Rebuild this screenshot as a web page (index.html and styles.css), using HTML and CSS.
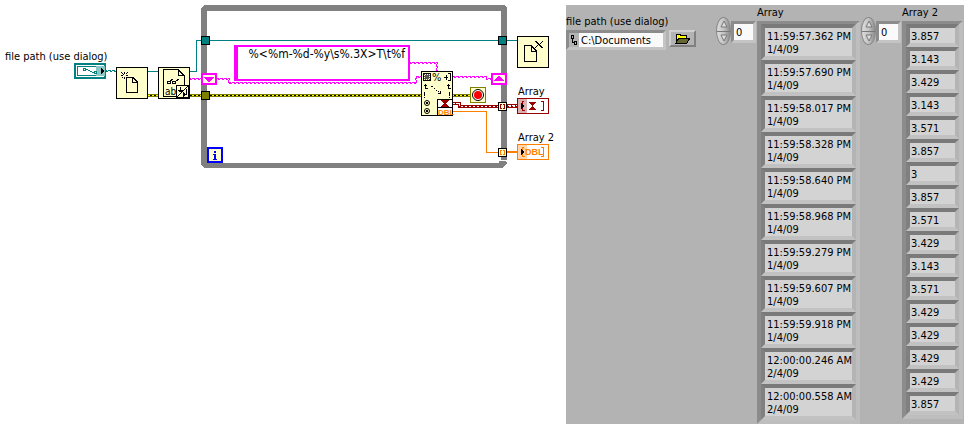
FILE: index.html
```html
<!DOCTYPE html>
<html lang="en">
<head>
<meta charset="utf-8">
<title>Read text file in a loop</title>
<link rel="stylesheet" href="styles.css">
</head>
<body>
<main class="workspace">
  <section class="diagram" aria-label="Block diagram">
    <svg class="canvas" width="566" height="180" viewBox="0 0 566 180" shape-rendering="crispEdges">
      <defs>
        <pattern id="wave-pink" width="4" height="2" patternUnits="userSpaceOnUse"><path d="M0 0h3v1h-3zM2 1h2v1h-2z" fill="#f0f"/></pattern>
        <pattern id="wave-pink-v" width="2" height="4" patternUnits="userSpaceOnUse"><path d="M0 0v3h1v-3zM1 2v2h1v-2z" fill="#f0f"/></pattern>
        <pattern id="wave-teal" width="4" height="2" patternUnits="userSpaceOnUse"><path d="M0 0h3v1h-3zM2 1h2v1h-2z" fill="#008080"/></pattern>
        <pattern id="error" width="4" height="4" y="94" patternUnits="userSpaceOnUse"><path d="M0 0h4v3h-4z" fill="#808000"/><path d="M0 1h2v1h-2z" fill="#ff0"/><path d="M2 1h2v1h-2z" fill="#000"/></pattern>
        <pattern id="time" width="4" height="2" y="1" patternUnits="userSpaceOnUse"><path d="M0 0h4v2h-4z" fill="#990000"/><path d="M0 0h3v1h-3zM1 1h2v1h-2z" fill="#fff"/></pattern>
      </defs>

      <!-- while loop frame -->
      <path d="M204 5H504L507 8V160H501V11H207V163H499V161H505L507 163L504 168H204L201 165V8Z" fill="#808080"/>
      <path d="M503 168v-1h1v-1h2v1h1v1z" fill="#fff"/>

      <!-- wires -->
      <path d="M148 71.500H158M190 71.500H196.500V40.500H517" fill="none" stroke="#008080"/>
      <path d="M106 70h10v2h-10z" fill="url(#wave-teal)"/>
      <path d="M148 94h10v3h-10zM190 94h231v3h-231zM453 94h17v3h-17z" fill="url(#error)"/>
      <path d="M190 78h11v2h-11zM217 78h11v2h-11zM229 82h188v2h-188zM416 76h5v2h-5zM410 62h28v2h-28zM453 76h34v2h-34zM486 78h5v2h-5z" fill="url(#wave-pink)"/>
      <path d="M228 78h2v6h-2zM415 77h2v6h-2zM436 63h2v8h-2z" fill="url(#wave-pink-v)"/>
      <path d="M453 103h5v2h-5zM459 106h39v1h-39zM507 105h10v2h-10z" fill="url(#time)"/>
      <path d="M453 102.500H460.500V105.500H498M453 104.500H458.500V107.500H498M507 104.500h10M507 107.500h10" fill="none" stroke="#900"/>
      <path d="M453 111.500H486.500V152.500H498" fill="none" stroke="#ff8000"/>
      <path d="M507 151h10v2h-10z" fill="#ff8000"/>

      <!-- file path terminal -->
      <text x="5" y="60">file path (use dialog)</text>
      <path d="M75 64h30v14h-30z" fill="#fff" stroke="#008080" stroke-width="2"/>
      <path d="M77.500 66.500h26v9h-26z" fill="#fff" stroke="#008080"/>
      <path d="M96 66h9v10h-9z" fill="#8cc6c6"/>
      <path d="M101 68h1v1h1v1h1v2h-1v1h-1v1h-1z" fill="#000"/>
      <path d="M83.500 68.500h2v2h-2zM94.500 71.500h2v2h-2zM86 69.500h2M88 70.500h2M90 71.500h2M92 72.500h2" fill="none" stroke="#008080"/>

      <!-- open file -->
      <path d="M116.500 67.500h31v31h-31z" class="node"/>
      <path d="M126.500 77.500H133L137.500 82V92.500H126.500ZM132.500 77.500V82.500H137" class="ink"/>
      <path d="M124 72h1v2h-1zM121 72h1v1h1v1h1v1h-1v-1h-1zM127 72h1v1h-1v1h-1v-1h1zM121 75h2v1h-2zM126 75h2v1h-2zM124 77h1v2h-1zM122 77h1v1h-1z" fill="#000"/>

      <!-- read text file -->
      <path d="M158.500 67.500h31v31h-31z" class="node"/>
      <path d="M163.500 96.500V69.500H178L184.500 76V86M163.500 96.500H176M178.500 69.500V75.500H184" class="ink"/>
      <path d="M167.500 81.500h3v2h-3zM172.500 81.500h3v2h-3zM170 81l3-2M176 81l3-2" class="ink"/>
      <text x="165" y="95" class="tiny">ab</text>
      <path d="M176.500 85.500h12v12h-12z" class="node"/>
      <path d="M177 97L188 86M180.500 87v4M178 90.500h5M179 91.500h3M186.500 89v5M183 94.500h4M183.500 92v5M184.500 93v3" class="ink"/>

      <!-- loop tunnels and shift registers -->
      <path d="M201.500 36.500h8v8h-8zM498.500 36.500h8v8h-8z" fill="#008080" stroke="#000"/>
      <path d="M201.500 91.500h8v8h-8z" fill="#808000" stroke="#000"/>
      <path d="M202 74h14v10h-14zM492 74h14v10h-14z" fill="#ffffe0" stroke="#f0f" stroke-width="2"/>
      <path d="M204 77h10v1h-1v1h-1v1h-1v1h-1v1h-2v-1h-1v-1h-1v-1h-1v-1h-1zM494 81h10v-1h-1v-1h-1v-1h-1v-1h-1v-1h-2v1h-1v1h-1v1h-1v1h-1z" fill="#f0f"/>
      <path d="M498.500 102.500h8v8h-8zM498.500 148.500h8v8h-8z" class="node"/>
      <path d="M502 104.500H500.500V108.500H502M503 104.500H504.500V108.500H503" fill="none" stroke="#900"/>
      <path d="M502 150.500H500.500V154.500H502M503 150.500H504.500V154.500H503" fill="none" stroke="#ff8000"/>

      <!-- iteration counter -->
      <path d="M208 148h14v14h-14z" fill="#ffffd0" stroke="#00f" stroke-width="2"/>
      <path d="M214 151h2v2h-2zM213 154h3v5h1v1h-4v-1h1v-4h-1z" fill="#00f"/>

      <!-- format string constant -->
      <path d="M234 45h176v36h-176z" fill="#f0f"/>
      <path d="M238 47h170v32h-170z" fill="#fff"/>
      <text x="405" y="58" text-anchor="end" class="format">%&lt;%m-%d-%y\s%.3X&gt;T\t%f</text>

      <!-- scan from string -->
      <path d="M421.500 71.500h31v44h-31z" class="node"/>
      <path d="M423.500 73.500h7v7h-7z" class="ink"/>
      <path d="M424 74h1v1h1v-1h1v1h1v-1h1v1h1v1h-1v1h1v1h-1v1h1v1h-1v-1h-1v1h-1v-1h-1v1h-1v-1h-1v-1h1v-1h-1v-1h1v-1h-1z" fill="#555"/>
      <text x="432" y="81">%</text>
      <path d="M444 77.500h4M446.500 75v5M448 73.500h2V80.500h-2M425.500 84v4h2M424 85.500h3M448.500 84v4h2M447 85.500h3" class="ink"/>
      <path d="M424 92h1v4h-1zM424 97h1v1h-1zM449 92h1v4h-1zM449 97h1v1h-1zM431 86h2v1h-2zM434 88h1v1h-1zM436 90h1v1h-1zM438 91h1v1h-1zM440 94v-3h1v3h-3v-1h2z" fill="#000"/>
      <g shape-rendering="auto"><circle cx="427" cy="103" r="2.500" class="ink"/><circle cx="427" cy="111" r="2.500" class="ink"/></g>
      <path d="M426 102h2v2h-2zM426 110h2v2h-2z" fill="#000"/>
      <path d="M437.500 99.500h15v16h-15z" fill="#fff" stroke="#000"/>
      <path d="M438 107.500h14" stroke="#000"/>
      <path d="M441 100h8v1h-1v1h-1v1h-1v1h1v1h1v1h1v1h-8v-1h1v-1h1v-1h1v-1h-1v-1h-1v-1h-1z" fill="#900"/>
      <text x="438" y="115" class="type thin">DBL</text>

      <!-- loop condition -->
      <path d="M470.500 87.500h15v15h-15z" fill="#ffffcb" stroke="#808000"/>
      <g shape-rendering="auto"><circle cx="478" cy="95" r="5.500" fill="#fff" stroke="#000"/><circle cx="478" cy="95" r="4" fill="#f00"/></g>

      <!-- close file -->
      <path d="M517.500 36.500h31v31h-31z" class="node"/>
      <path d="M524.500 45.500H531L536.500 51V61.500H524.500ZM531.500 45.500V51.500H536" class="ink"/>
      <path d="M535 41h2v1h1v1h1v1h1v-1h1v-1h1v-1h1v1h-1v1h-1v1h-1v1h1v1h1v1h1v1h-2v-1h-1v-1h-1v-1h-1v1h-1v1h-1v1h-1v-1h1v-1h1v-1h1v-1h-1v-1h-1v-1h-1z" fill="#000"/>

      <!-- array indicators -->
      <text x="518" y="95">Array</text>
      <path d="M517.500 98.500h31v15h-31z" fill="#fff" stroke="#900"/>
      <path d="M518 99h9v14h-9z" fill="#dcb0b0"/>
      <path d="M524 101.500H522.500V110.500H525M541 101.500H543.500V110.500H541M529 102.500h7M529 109.500h7" fill="none" stroke="#900"/>
      <path d="M530 103h5v1h-1v1h-1v2h1v1h1v1h-5v-1h1v-1h1v-2h-1v-1h-1z" fill="#900"/>
      <path d="M521 103h1v1h1v1h1v2h-1v1h-1v1h-1z" fill="#000"/>
      <text x="518" y="141">Array 2</text>
      <path d="M517.500 144.500h31v15h-31z" fill="#fff" stroke="#ff8000"/>
      <path d="M518 145h9v14h-9z" fill="#ffd5ad"/>
      <path d="M524 147.500H522.500V156.500H525M541 147.500H543.500V156.500H541" fill="none" stroke="#ff8000"/>
      <text x="525" y="155" class="type">DBL</text>
      <path d="M521 149h1v1h1v1h1v2h-1v1h-1v1h-1z" fill="#000"/>
    </svg>
  </section>

  <section class="panel" aria-label="Front panel">
    <div class="path-control">
      <label for="path">file path (use dialog)</label>
      <div class="path-row">
        <div class="path-field">
          <svg width="10" height="14" viewBox="0 0 10 14" shape-rendering="crispEdges" aria-hidden="true"><path d="M2.500 2.500h2v3h-2zM5.500 8.500h2v3h-2zM3.500 6v3.500h2" class="ink"/></svg>
          <input id="path" type="text" value="C:\Documents">
        </div>
        <button class="browse" type="button" aria-label="Browse">
          <svg width="16" height="12" viewBox="0 0 16 12" shape-rendering="crispEdges"><path d="M1 1h4v1h6v3h-7l-3 5z" fill="#ff0" stroke="#000"/><path d="M4 5h11l-3 5h-11z" fill="#666633" stroke="#000"/></svg>
        </button>
      </div>
    </div>

    <div class="array-control">
      <div class="index">
        <div class="spinner">
          <button type="button" aria-label="Increase index"><svg width="8" height="8" viewBox="0 0 8 8"><path d="M1 7L4 1L7 7Z" fill="#ddd" stroke="#777"/></svg></button>
          <button type="button" aria-label="Decrease index"><svg width="8" height="8" viewBox="0 0 8 8"><path d="M1 1L4 7L7 1Z" fill="#ddd" stroke="#777"/></svg></button>
        </div>
        <input type="text" value="0" aria-label="Array index">
      </div>
      <div class="array stamps">
        <h2>Array</h2>
        <ol>
          <li>11:59:57.362 PM<br>1/4/09</li>
          <li>11:59:57.690 PM<br>1/4/09</li>
          <li>11:59:58.017 PM<br>1/4/09</li>
          <li>11:59:58.328 PM<br>1/4/09</li>
          <li>11:59:58.640 PM<br>1/4/09</li>
          <li>11:59:58.968 PM<br>1/4/09</li>
          <li>11:59:59.279 PM<br>1/4/09</li>
          <li>11:59:59.607 PM<br>1/4/09</li>
          <li>11:59:59.918 PM<br>1/4/09</li>
          <li>12:00:00.246 AM<br>2/4/09</li>
          <li>12:00:00.558 AM<br>2/4/09</li>
        </ol>
      </div>
    </div>

    <div class="array-control">
      <div class="index">
        <div class="spinner">
          <button type="button" aria-label="Increase index"><svg width="8" height="8" viewBox="0 0 8 8"><path d="M1 7L4 1L7 7Z" fill="#ddd" stroke="#777"/></svg></button>
          <button type="button" aria-label="Decrease index"><svg width="8" height="8" viewBox="0 0 8 8"><path d="M1 1L4 7L7 1Z" fill="#ddd" stroke="#777"/></svg></button>
        </div>
        <input type="text" value="0" aria-label="Array 2 index">
      </div>
      <div class="array values">
        <h2>Array 2</h2>
        <ol>
          <li>3.857</li>
          <li>3.143</li>
          <li>3.429</li>
          <li>3.143</li>
          <li>3.571</li>
          <li>3.857</li>
          <li>3</li>
          <li>3.857</li>
          <li>3.571</li>
          <li>3.429</li>
          <li>3.143</li>
          <li>3.571</li>
          <li>3.429</li>
          <li>3.429</li>
          <li>3.429</li>
          <li>3.429</li>
          <li>3.857</li>
        </ol>
      </div>
    </div>
  </section>
</main>
</body>
</html>
```
FILE: styles.css
```css
* { box-sizing: border-box; }

body {
  margin: 0;
  background: #fff;
  color: #000;
  font: 11px/13px "DejaVu Sans Condensed", "DejaVu Sans", sans-serif;
  font-stretch: condensed;
}

.workspace { display: flex; align-items: flex-start; padding-right: 5px; }
.diagram { flex: none; }
.canvas { display: block; }

.node { fill: #ffffcb; stroke: #000; }
.ink { fill: none; stroke: #000; }
.tiny { font-size: 10px; }
.format { font-size: 12px; }
.type { font: bold 9px "Liberation Sans", sans-serif; fill: #ff8000; }
.thin { font-size: 8px; }

.panel {
  flex: 1;
  display: flex;
  margin-top: 5px;
  background: #b3b3b3;
}

label, h2 { display: block; margin: 0; font: inherit; line-height: 16px; white-space: nowrap; }

input {
  min-width: 0;
  border: 0;
  padding: 0 2px;
  background: #fafafa;
  color: inherit;
  font: inherit;
}

.path-control { width: 150px; padding-top: 9px; }
.path-row { display: flex; align-items: flex-start; gap: 3px; }
.path-field {
  display: flex;
  width: 100px;
  height: 20px;
  border: 3px solid;
  border-color: #8c8c8c #c4c4c4 #c4c4c4 #8c8c8c;
  background: #b3b3b3;
}
.path-field svg { flex: none; }
.path-field input { flex: 1; }

.browse {
  display: flex;
  align-items: center;
  justify-content: center;
  width: 27px;
  height: 17px;
  padding: 0;
  border: 2px solid;
  border-color: #d0d0d0 #808080 #808080 #d0d0d0;
  background: #b3b3b3;
}

.array-control { display: flex; gap: 1px; margin-right: 1px; }
.index { display: flex; align-items: flex-start; padding-top: 12px; }
.index input {
  width: 25px;
  height: 22px;
  margin-top: 4px;
  border: 3px solid;
  border-color: #8c8c8c #c4c4c4 #c4c4c4 #8c8c8c;
}
.spinner {
  display: flex;
  flex-direction: column;
  width: 15px;
  height: 28px;
  border: 1px solid #888;
  border-radius: 50%;
  overflow: hidden;
  background: linear-gradient(90deg, #ddd, #c4c4c4 50%, #8c8c8c);
}
.spinner button {
  flex: 1;
  display: flex;
  align-items: center;
  justify-content: center;
  padding: 0;
  border: 0;
  background: none;
}
.spinner button + button { border-top: 1px solid #777; }

ol {
  margin: 0;
  padding: 0;
  list-style: none;
  border: 4px solid;
  border-top-width: 3px;
  border-color: #8c8c8c #bebebe #bebebe #8c8c8c;
}
li {
  border: 4px solid;
  border-color: #7a7a7a #b4b4b4 #c2c2c2 #808080;
  background: #d3d3d3;
  white-space: nowrap;
}
.stamps { width: 103px; }
.stamps li { height: 36px; padding: 2px 0 0 2px; }
.values { width: 61px; }
.values li { height: 23px; padding: 2px 0 0 1px; }
```
